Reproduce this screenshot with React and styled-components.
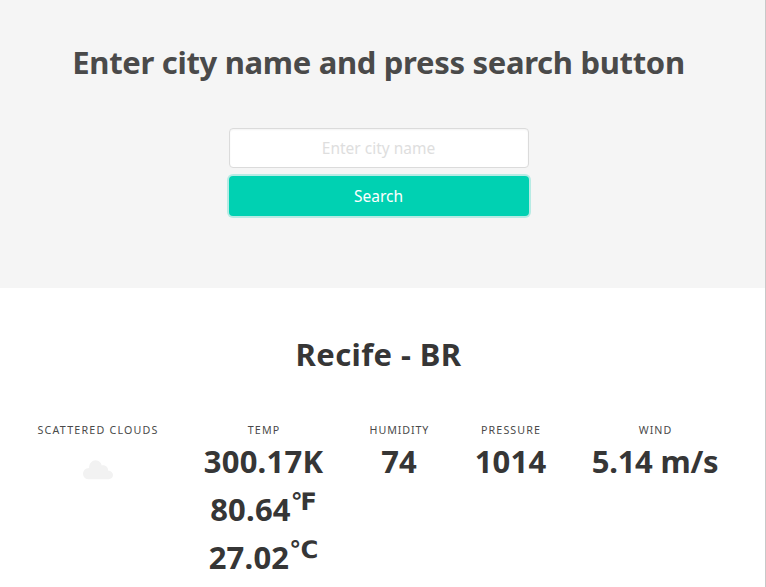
import React from 'react';
import styled, { createGlobalStyle } from 'styled-components';

const GlobalStyle = createGlobalStyle`
  *, *::before, *::after { box-sizing: border-box; }
  body { margin: 0; background: #fff; font-family: "Noto Sans", sans-serif; overflow: hidden; }
  h1, h2, p { margin: 0; }
`;

const Page = styled.main`
  height: 587px;
  overflow: hidden;
  border-right: 1px solid #c8c8c8;
`;

const Hero = styled.section`
  height: 288px;
  padding: 38px 8px 0 0;
  display: flex;
  flex-direction: column;
  align-items: center;
  background: #f5f5f5;
`;

const Heading = styled.h1`
  line-height: 48px;
  font-size: 31px;
  font-weight: 700;
  white-space: nowrap;
  color: ${(p) => p.$color};
  letter-spacing: ${(p) => p.$spacing}px;
`;

const Form = styled.form`
  width: 300px;
  margin-top: 42px;
  display: flex;
  flex-direction: column;
  gap: 8px;
`;

const Input = styled.input`
  height: 40px;
  padding: 0 11px;
  border: 1px solid #dbdbdb;
  border-radius: 4px;
  background: #fff;
  box-shadow: inset 0 1px 2px rgba(10, 10, 10, 0.05);
  font: 400 15.5px "Noto Sans", sans-serif;
  text-align: center;
  &::placeholder { color: #dedede; opacity: 1; }
`;

const SearchButton = styled.button`
  height: 40px;
  padding: 0;
  border: 0;
  border-radius: 4px;
  background: #00d1b2;
  box-shadow: 0 0 0 2px rgba(0, 209, 178, 0.25);
  color: #fff;
  font: 400 15.5px "Noto Sans", sans-serif;
`;

const Weather = styled.section`
  padding: 42px 8px 0 0;
  display: flex;
  flex-direction: column;
  align-items: center;
`;

const Level = styled.div`
  margin: 44px 2px 0 0;
  display: grid;
  grid-template-columns: 121px 121px 60px 73px 126px;
  column-gap: 45px;
`;

const Item = styled.div`
  display: flex;
  flex-direction: column;
  align-items: center;
  white-space: nowrap;
`;

const Label = styled.p`
  height: 15px;
  line-height: 17px;
  font-size: 10.7px;
  letter-spacing: ${(p) => p.$spacing}px;
  margin-right: -${(p) => p.$spacing}px;
  text-transform: uppercase;
  color: #4a4a4a;
`;

const Value = styled.p`
  display: flex;
  height: 48px;
  line-height: 48px;
  font-size: 31px;
  font-weight: 700;
  letter-spacing: ${(p) => p.$spacing}px;
  color: #363636;
`;

const Unit = styled.sup`
  font-family: "DejaVu Sans", sans-serif;
  font-size: 24px;
  line-height: 34px;
  letter-spacing: 0;
`;

const CloudIcon = styled.svg`
  width: 30px;
  height: 20px;
  margin-top: 23px;
  fill: #f2f2f2;
`;

export default function App() {
  return (
    <Page>
      <GlobalStyle />
      <Hero>
        <Heading $color="#4a4a4a" $spacing={-0.31}>Enter city name and press search button</Heading>
        <Form onSubmit={(e) => e.preventDefault()}>
          <Input placeholder="Enter city name" />
          <SearchButton type="submit">Search</SearchButton>
        </Form>
      </Hero>
      <Weather>
        <Heading as="h2" $color="#363636" $spacing={0.4}>Recife - BR</Heading>
        <Level>
          <Item>
            <Label $spacing={1.2}>scattered clouds</Label>
            <CloudIcon viewBox="0 0 30 20">
              <path d="M5.2 19.2C2.2 19.2 0 16.8 0 13.8C0 10.8 2.3 8.1 6.1 8C6.1 3.5 9 .3 12.7 .3C15.8 .3 18 2.5 18.8 5.4C22.2 4.7 25.3 7.2 25 10.4C28 10.8 30 12.5 30 15.1C30 17.5 28.2 19.2 25.7 19.2Z" />
            </CloudIcon>
          </Item>
          <Item>
            <Label $spacing={1.1}>Temp</Label>
            <Value $spacing={0.2}>300.17K</Value>
            <Value $spacing={0.2}>80.64<Unit>℉</Unit></Value>
            <Value $spacing={0.2}>27.02<Unit>℃</Unit></Value>
          </Item>
          <Item>
            <Label $spacing={0.9}>Humidity</Label>
            <Value $spacing={0}>74</Value>
          </Item>
          <Item>
            <Label $spacing={1.1}>Pressure</Label>
            <Value $spacing={0.2}>1014</Value>
          </Item>
          <Item>
            <Label $spacing={1}>Wind</Label>
            <Value $spacing={-0.25}>5.14 m/s</Value>
          </Item>
        </Level>
      </Weather>
    </Page>
  );
}
